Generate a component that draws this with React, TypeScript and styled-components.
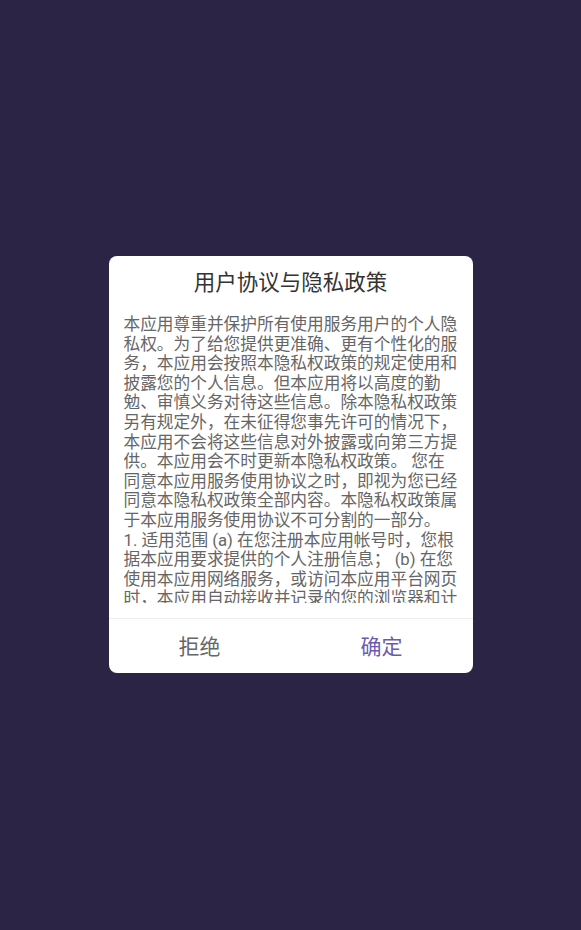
import styled, { createGlobalStyle } from 'styled-components';

const GlobalStyle = createGlobalStyle`
  html, body {
    margin: 0;
    padding: 0;
    height: 100%;
    background: #2c2444;
  }
  #root {
    height: 100%;
  }
`;

const Screen = styled.div`
  height: 930px;
  display: flex;
  justify-content: center;
  padding-top: 256px;
  box-sizing: border-box;
  font-family: Roboto, 'Noto Sans CJK SC', sans-serif;
`;

const Dialog = styled.div`
  width: 364px;
  height: 417px;
  background: #ffffff;
  border-radius: 8px;
  display: flex;
  flex-direction: column;
  overflow: hidden;
`;

const Title = styled.h1`
  margin: 0;
  padding-top: 13px;
  height: 44px;
  box-sizing: border-box;
  text-align: center;
  font-size: 21.5px;
  line-height: 28px;
  font-weight: 400;
  color: #333333;
`;

const Body = styled.div`
  margin: 15px 0 0 15px;
  width: 336px;
  height: 288px;
  overflow-y: auto;
  scrollbar-width: none;
  font-size: 16.7px;
  line-height: 19.6px;
  color: #666666;
  &::-webkit-scrollbar {
    display: none;
  }
`;

const Paragraph = styled.p`
  margin: 0;
`;

const Actions = styled.div`
  margin-top: 15px;
  border-top: 1px solid #ececec;
  display: flex;
  flex: 1;
`;

const ActionButton = styled.button<{ $primary?: boolean }>`
  all: unset;
  flex: 1;
  display: flex;
  align-items: center;
  justify-content: center;
  padding-top: 2px;
  font-family: Roboto, 'Noto Sans CJK SC', sans-serif;
  font-size: 21px;
  line-height: 28px;
  color: ${({ $primary }) => ($primary ? '#6b5bb0' : '#666666')};
  cursor: pointer;
`;

const App = () => {
  return (
    <>
      <GlobalStyle />
      <Screen>
        <Dialog>
          <Title>用户协议与隐私政策</Title>
          <Body>
            <Paragraph>
              本应用尊重并保护所有使用服务用户的个人隐私权。为了给您提供更准确、更有个性化的服务，本应用会按照本隐私权政策的规定使用和披露您的个人信息。但本应用将以高度的勤勉、审慎义务对待这些信息。除本隐私权政策另有规定外，在未征得您事先许可的情况下，本应用不会将这些信息对外披露或向第三方提供。本应用会不时更新本隐私权政策。 您在同意本应用服务使用协议之时，即视为您已经同意本隐私权政策全部内容。本隐私权政策属于本应用服务使用协议不可分割的一部分。
            </Paragraph>
            <Paragraph>
              1. 适用范围 (a) 在您注册本应用帐号时，您根据本应用要求提供的个人注册信息； (b) 在您使用本应用网络服务，或访问本应用平台网页时，本应用自动接收并记录的您的浏览器和计算机上的信息，包括但不限于您的IP地址、浏览器的类型、使用的语言、访问日期和时间、软硬件特征信息及您需求的网页记录等数据；
            </Paragraph>
          </Body>
          <Actions>
            <ActionButton>拒绝</ActionButton>
            <ActionButton $primary>确定</ActionButton>
          </Actions>
        </Dialog>
      </Screen>
    </>
  );
};

export default App;
